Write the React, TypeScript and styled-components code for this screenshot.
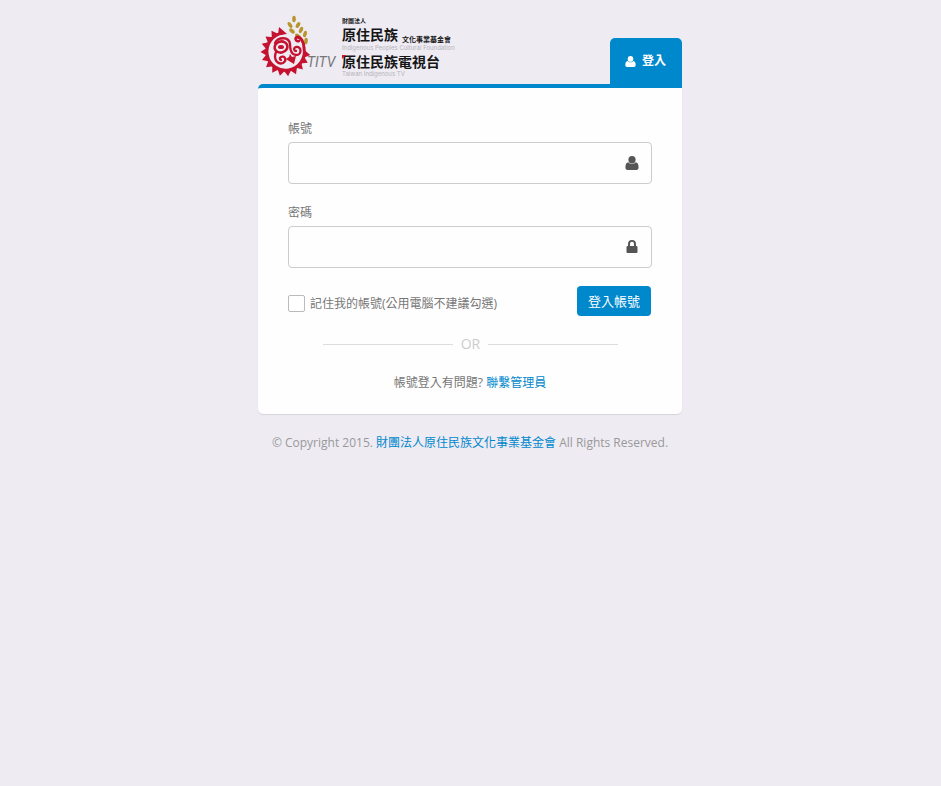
import React from "react";
import styled, { createGlobalStyle } from "styled-components";

const BLUE = "#0088cc";

const GlobalStyle = createGlobalStyle`
  *, *::before, *::after { box-sizing: border-box; }
  body {
    margin: 0;
    background: #eeebf3;
    color: #777;
    font-family: "Open Sans", "Noto Sans CJK TC", sans-serif;
    font-size: 12px;
    line-height: 20px;
  }
`;

const Page = styled.main`
  padding: 14px 9px 14px 8px;
`;

const Panel = styled.section`
  max-width: 424px;
  margin: 0 auto;
`;

const PanelHeader = styled.header`
  display: flex;
  justify-content: space-between;
  align-items: flex-end;
`;

const LogoLink = styled.a`
  display: block;
  height: 70px;
  svg { display: block; }
`;

const Tab = styled.h1`
  display: flex;
  align-items: center;
  gap: 6px;
  height: 46px;
  margin: 0;
  padding: 0 16px 0 15px;
  border-radius: 5px 5px 0 0;
  background: ${BLUE};
  color: #fff;
  font-size: 12px;
  font-weight: 700;
`;

const Card = styled.form`
  padding: 31px 30px 21px;
  border-top: 4px solid ${BLUE};
  border-radius: 5px 0 5px 5px;
  background: #fefefe;
  box-shadow: 0 1px 1px rgba(0, 0, 0, 0.1);
`;

const Field = styled.div`
  margin-bottom: 18px;
`;

const FieldLabel = styled.label`
  display: block;
  margin-bottom: 3px;
`;

const InputBox = styled.div`
  display: flex;
  align-items: center;
  height: 42px;
  padding: 0 12px 0 0;
  border: 1px solid #ccc;
  border-radius: 4px;
  color: #555;
  &:focus-within { border-color: ${BLUE}; }
`;

const Fields = styled.div`
  display: grid;
  gap: 1px;
`;

const TextInput = styled.input`
  flex: 1;
  min-width: 0;
  height: 40px;
  padding: 0 12px;
  border: 0;
  outline: 0;
  background: transparent;
  color: #555;
  font: inherit;
`;

const Actions = styled.div`
  display: flex;
  justify-content: space-between;
  align-items: center;
  padding-right: 1px;
`;

const Remember = styled.label`
  display: flex;
  align-items: center;
  gap: 5px;
  padding-top: 5px;
`;

const CheckBox = styled.input`
  appearance: none;
  width: 17px;
  height: 17px;
  margin: 0;
  border: 1px solid #bbb;
  border-radius: 2px;
  background: #fff;
  &:checked { background: ${BLUE}; }
`;

const SubmitButton = styled.button`
  height: 30px;
  padding: 0 11px;
  border: 0;
  border-radius: 4px;
  background: ${BLUE};
  color: #fff;
  font: inherit;
  font-size: 13px;
  white-space: nowrap;
`;

const Divider = styled.div`
  display: flex;
  align-items: center;
  gap: 8px;
  margin: 18px 34px 19px 35px;
  color: #ccc;
  font-size: 14px;
  &::before, &::after {
    content: "";
    flex: 1;
    height: 1px;
    background: #ddd;
  }
`;

const Help = styled.p`
  margin: 0;
  text-align: center;
`;

const Anchor = styled.a`
  color: ${BLUE};
  text-decoration: none;
`;

const Copyright = styled.footer`
  margin-top: 19px;
  color: #999;
  text-align: center;
`;

function UserIcon({ size }: { size: number }) {
  return (
    <svg width={size} height={size} viewBox="0 0 14 14" fill="currentColor" aria-hidden="true">
      <ellipse cx="7" cy="3.7" rx="3.6" ry="3.7" />
      <path d="M3.3 6.3C4.2 7.4 5.5 8 7 8s2.8-.6 3.7-1.7C12.7 6.5 13.6 8.6 13.6 11.5 13.6 13 12.8 14 11.4 14H2.6C1.2 14 .4 13 .4 11.5.4 8.6 1.3 6.5 3.3 6.3Z" />
    </svg>
  );
}

function LockIcon() {
  return (
    <svg width="14" height="14" viewBox="0 0 14 14" fill="currentColor" aria-hidden="true">
      <path d="M5 6H9V4A2 2.300 0 0 0 5 4ZM11 6H11.500Q12.500 6 12.500 7V12Q12.500 13 11.500 13H2.500Q1.500 13 1.500 12V7Q1.500 6 2.500 6H3V4A4 4 0 0 1 11 4Z" />
    </svg>
  );
}

/* Sun-ray teeth run from the upper left, round the bottom, to the right side. */
const TEETH = Array.from({ length: 13 }, (_, i) => 236 - i * 19);

const LEAVES = [
  [36, 5, 0], [32, 11, -35], [40, 11, 30], [34, 17, -50], [43, 16, 25],
  [40, 22, -55], [47, 20, 15], [48, 27, 5],
];

function Logo() {
  return (
    <svg width="200" height="66" viewBox="0 0 200 66" role="img" aria-label="原住民族電視台">
      <g fill="#b8962e">
        {LEAVES.map(([x, y, r]) => (
          <ellipse key={`${x}-${y}`} cx={x} cy={y} rx="1.8" ry="3.3" transform={`rotate(${r} ${x} ${y})`} />
        ))}
      </g>
      <g fill="#c4122f">
        {TEETH.map((a) => (
          <path key={a} d="M18.5 -4 L25 0 L18.5 4 Z" transform={`translate(27.5 37.5) rotate(${a})`} />
        ))}
        <path d="M21 13 L29 20 L20 21 Z" />
        <path d="M28 45 L31 43 L32 40 L34 43 L38 42 L36 50 L31 47 Z" />
        <ellipse cx="23" cy="33" rx="3" ry="2" />
      </g>
      <g fill="none" stroke="#c4122f" strokeLinecap="round">
        <path d="M25 19 A18.7 18.7 0 1 0 46 34 C46 28 43 23 39 23" strokeWidth="3" />
        <path d="M39 23 C36 24 38 28 41 27" strokeWidth="2.6" />
        <ellipse cx="23" cy="33" rx="6.5" ry="5.5" strokeWidth="2.6" transform="rotate(-15 23 33)" />
        <path d="M17 29 C20 23 31 22 32 30 C32 37 34 41 38 41 C44 41 44 32 38 33 C35 34 36 37 38 37" strokeWidth="2.3" />
        <path d="M18 38 C15 46 20 51 25 49 C30 46 26 41 23 43 C21 44 22 46 23 46" strokeWidth="2.3" />
      </g>
      <text x="49" y="53" fill="#777" fontFamily="Roboto, sans-serif" fontSize="14" fontStyle="italic">TITV</text>
      <g fontFamily="'Noto Sans CJK TC', sans-serif" fill="#161616" fontWeight="700">
        <text x="84" y="9" fontSize="6">財團法人</text>
        <text x="84" y="26" fontSize="14">原住民族</text>
        <text x="144" y="28" fontSize="7">文化事業基金會</text>
        <text x="84" y="53" fontSize="14">原住民族電視台</text>
      </g>
      <path d="M84 45 V41 H88 Z" fill="#d1152c" />
      <g fontFamily="Inter, sans-serif" fill="#b6b4ba">
        <text x="84" y="36" fontSize="6">Indigenous Peoples Cultural Foundation</text>
        <text x="84" y="62" fontSize="6">Taiwan Indigenous TV</text>
      </g>
    </svg>
  );
}

export default function App() {
  return (
    <>
      <GlobalStyle />
      <Page>
        <Panel>
          <PanelHeader>
            <LogoLink href="#"><Logo /></LogoLink>
            <Tab><UserIcon size={11} />登入</Tab>
          </PanelHeader>
          <Card onSubmit={(e) => e.preventDefault()}>
            <Fields>
              <Field>
                <FieldLabel htmlFor="account">帳號</FieldLabel>
                <InputBox>
                  <TextInput id="account" type="text" autoComplete="username" />
                  <UserIcon size={14} />
                </InputBox>
              </Field>
              <Field>
                <FieldLabel htmlFor="password">密碼</FieldLabel>
                <InputBox>
                  <TextInput id="password" type="password" autoComplete="current-password" />
                  <LockIcon />
                </InputBox>
              </Field>
            </Fields>
            <Actions>
              <Remember>
                <CheckBox type="checkbox" />
                記住我的帳號(公用電腦不建議勾選)
              </Remember>
              <SubmitButton type="submit">登入帳號</SubmitButton>
            </Actions>
            <Divider>OR</Divider>
            <Help>帳號登入有問題? <Anchor href="#">聯繫管理員</Anchor></Help>
          </Card>
          <Copyright>
            © Copyright 2015. <Anchor href="#">財團法人原住民族文化事業基金會</Anchor> All Rights Reserved.
          </Copyright>
        </Panel>
      </Page>
    </>
  );
}
